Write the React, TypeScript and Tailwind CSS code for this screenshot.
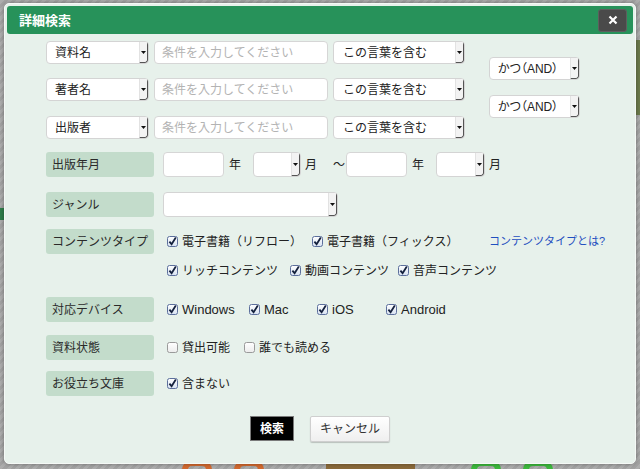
import React from "react";

const FONT = { fontFamily: '"Liberation Sans", "Noto Sans CJK JP", sans-serif' };

function Arrow({ h }: { h: number }) {
  return (
    <span
      className="flex w-[9px] shrink-0 items-center justify-center rounded-br-[3px] border-r border-b border-l border-r-[#555] border-b-[#555] border-l-[#e2e2e2] bg-[#f3f3f3]"
      style={{ height: h }}
    >
      <svg width="5" height="3" viewBox="0 0 5 3">
        <path d="M0 0 L5 0 L2.5 3 Z" fill="#111" />
      </svg>
    </span>
  );
}

function Select({
  w,
  h = 23,
  text = "",
  pl = 8,
  palt = false,
}: {
  w: number;
  h?: number;
  text?: string;
  pl?: number;
  palt?: boolean;
}) {
  return (
    <div
      className="flex shrink-0 items-center overflow-hidden rounded-[4px] border border-[#d4d4d4] bg-white"
      style={{ width: w, height: h }}
    >
      <span
        className={`min-w-0 flex-1 whitespace-nowrap text-[12px] leading-none text-[#222] ${
          palt ? "[font-feature-settings:'palt']" : ""
        }`}
        style={{ paddingLeft: pl }}
      >
        {text}
      </span>
      <Arrow h={h - 2} />
    </div>
  );
}

function Input({ w, h = 23, placeholder = "" }: { w: number; h?: number; placeholder?: string }) {
  return (
    <div
      className="flex shrink-0 items-center rounded-[4px] border border-[#d6d6d6] bg-white pl-[7px] text-[12px] leading-none text-[#b3b3b3]"
      style={{ width: w, height: h }}
    >
      {placeholder}
    </div>
  );
}

function Check({ checked }: { checked: boolean }) {
  return (
    <svg width="11" height="11" viewBox="0 0 11 11" className="shrink-0">
      <defs>
        <linearGradient id="cg" x1="0" y1="0" x2="0" y2="1">
          <stop offset="0" stopColor="#ffffff" />
          <stop offset="1" stopColor="#d7e2f2" />
        </linearGradient>
        <linearGradient id="ug" x1="0" y1="0" x2="0" y2="1">
          <stop offset="0" stopColor="#ffffff" />
          <stop offset="1" stopColor="#ececec" />
        </linearGradient>
      </defs>
      <rect
        x="0.5"
        y="0.5"
        width="10"
        height="10"
        rx="2"
        fill={checked ? "url(#cg)" : "url(#ug)"}
        stroke={checked ? "#5c6f9c" : "#9a9a9a"}
      />
      {checked && <path d="M2.4 5.6 L4.6 8.2 L8.8 1.6" fill="none" stroke="#14213d" strokeWidth="1.8" />}
    </svg>
  );
}

function CItem({
  w,
  label,
  checked = true,
  latin = false,
}: {
  w?: number;
  label: string;
  checked?: boolean;
  latin?: boolean;
}) {
  return (
    <div className="flex shrink-0 items-center" style={w ? { width: w } : undefined}>
      <Check checked={checked} />
      <span className={`ml-[4px] leading-none text-[#222] ${latin ? "text-[13px]" : "text-[12px]"}`}>{label}</span>
    </div>
  );
}

function Label({ text }: { text: string }) {
  return (
    <div className="flex h-[25px] w-[108px] shrink-0 items-center rounded-[3px] bg-[#c3dccb] pl-[6px] text-[12px] leading-none text-[#2a2a2a]">
      {text}
    </div>
  );
}

export default function App() {
  return (
    <div
      style={FONT}
      className="relative h-[469px] w-[640px] overflow-hidden bg-[repeating-linear-gradient(135deg,#adadad_0px,#adadad_3px,#a2a2a2_3px,#a2a2a2_6px)]"
    >
      {/* background page bits peeking out */}
      <div className="absolute left-[182px] top-[460px] h-[20px] w-[30px] rounded-full border-[6px] border-[#d2692f]" />
      <div className="absolute left-[234px] top-[460px] h-[20px] w-[30px] rounded-full border-[6px] border-[#d2692f]" />
      <div className="absolute left-[326px] top-[462px] h-[14px] w-[89px] bg-[#8a6a3a]" />
      <div className="absolute left-[471px] top-[460px] h-[20px] w-[30px] rounded-full border-[6px] border-[#3cb83c]" />
      <div className="absolute left-[523px] top-[460px] h-[20px] w-[30px] rounded-full border-[6px] border-[#3cb83c]" />
      <div className="absolute left-0 top-[208px] h-[12px] w-[4px] bg-[#2e7d4a]" />
      <div className="absolute right-0 top-[40px] h-[75px] w-[4px] bg-[#6c7a4c]" />

      <div className="relative ml-[4px] mt-[3px] h-[461px] w-[632px] rounded-[5px] border border-[#f5f9f6] bg-[#e7f1eb] p-[2px] shadow-[0_0_4px_rgba(0,0,0,0.35)]">
        {/* title bar */}
        <div className="flex h-[28px] items-center justify-between rounded-[3px] bg-[#27925a] pl-[12px] pr-[6px]">
          <span className="text-[13px] font-bold leading-none text-white">詳細検索</span>
          <div className="flex h-[23px] w-[29px] items-center justify-center rounded-[3px] border border-[#5e5e5e] bg-[#4a4a4a]">
            <svg width="10" height="10" viewBox="0 0 10 10">
              <path d="M1.5 1.5 L8.5 8.5 M8.5 1.5 L1.5 8.5" stroke="#fff" strokeWidth="2.2" />
            </svg>
          </div>
        </div>

        {/* content */}
        <div className="pl-[39px]">
          {/* keyword block */}
          <div className="mt-[7px] flex">
            <div className="flex flex-col">
              {[
                ["資料名", "mt-0"],
                ["著者名", "mt-[14px]"],
                ["出版者", "mt-[15px]"],
              ].map(([t, m]) => (
                <div key={t} className={`flex gap-[5px] ${m}`}>
                  <Select w={103} text={t} />
                  <Input w={174} placeholder="条件を入力してください" />
                  <Select w={132} text="この言葉を含む" pl={9} />
                </div>
              ))}
            </div>
            <div className="ml-[24px] flex flex-col gap-[15px] pt-[16px]">
              <Select w={91} text="かつ（AND）" palt />
              <Select w={91} text="かつ（AND）" palt />
            </div>
          </div>

          {/* 出版年月 */}
          <div className="mt-[13px] flex items-center">
            <Label text="出版年月" />
            <div className="ml-[9px] flex items-center text-[12px] leading-none text-[#222]">
              <Input w={61} h={25} />
              <span className="ml-[5px]">年</span>
              <div className="ml-[12px]">
                <Select w={48} h={25} />
              </div>
              <span className="ml-[4px]">月</span>
              <span className="ml-[16px] mr-[1px]">〜</span>
              <Input w={61} h={25} />
              <span className="ml-[5px]">年</span>
              <div className="ml-[12px]">
                <Select w={49} h={25} />
              </div>
              <span className="ml-[4px]">月</span>
            </div>
          </div>

          {/* ジャンル */}
          <div className="mt-[15px] flex items-center">
            <Label text="ジャンル" />
            <div className="ml-[9px]">
              <Select w={175} h={25} />
            </div>
          </div>

          {/* コンテンツタイプ */}
          <div className="mt-[12px] flex items-start">
            <Label text="コンテンツタイプ" />
            <div className="ml-[13px] flex flex-col gap-[4px]">
              <div className="flex h-[25px] items-center">
                <CItem w={145} label="電子書籍（リフロー）" />
                <CItem w={177} label="電子書籍（フィックス）" />
                <span className="text-[11px] leading-none text-[#1f4fc0]">コンテンツタイプとは?</span>
              </div>
              <div className="flex h-[25px] items-center">
                <CItem w={123} label="リッチコンテンツ" />
                <CItem w={108} label="動画コンテンツ" />
                <CItem label="音声コンテンツ" />
              </div>
            </div>
          </div>

          {/* 対応デバイス */}
          <div className="mt-[14px] flex items-center">
            <Label text="対応デバイス" />
            <div className="ml-[13px] flex items-center">
              <CItem w={82} label="Windows" latin />
              <CItem w={68} label="Mac" latin />
              <CItem w={69} label="iOS" latin />
              <CItem label="Android" latin />
            </div>
          </div>

          {/* 資料状態 */}
          <div className="mt-[13px] flex items-center">
            <Label text="資料状態" />
            <div className="ml-[13px] flex items-center">
              <CItem w={77} label="貸出可能" checked={false} />
              <CItem label="誰でも読める" checked={false} />
            </div>
          </div>

          {/* お役立ち文庫 */}
          <div className="mt-[11px] flex items-center">
            <Label text="お役立ち文庫" />
            <div className="ml-[13px] flex items-center">
              <CItem label="含まない" />
            </div>
          </div>
        </div>

        {/* buttons */}
        <div className="mt-[20px] flex justify-center gap-[16px]">
          <div className="flex h-[25px] w-[44px] items-center justify-center border border-[#7a7a7a] bg-black text-[12px] font-bold leading-none text-white">
            検索
          </div>
          <div className="flex h-[26px] w-[80px] items-center justify-center rounded-[2px] border border-[#cfcfcf] bg-[linear-gradient(#ffffff,#efefef)] text-[12px] leading-none text-[#333] shadow-[0_1px_1px_rgba(0,0,0,0.2)]">
            キャンセル
          </div>
        </div>
      </div>
    </div>
  );
}
